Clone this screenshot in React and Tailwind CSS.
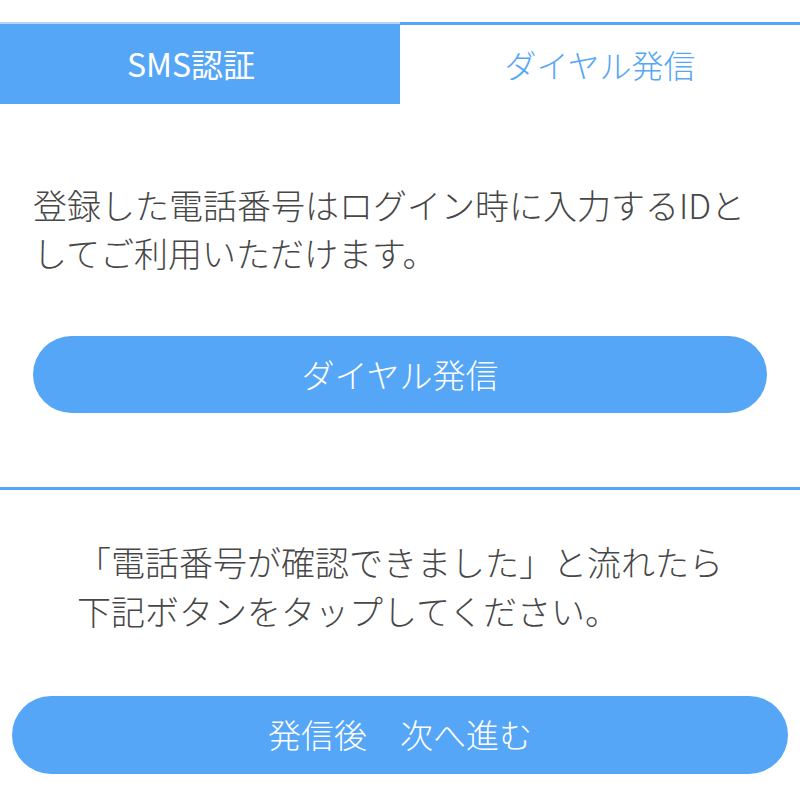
export default function App() {
  return (
    <div
      className="w-[800px] h-[800px] bg-white overflow-hidden text-[#474747] font-light"
      style={{ fontFamily: '"Noto Sans CJK JP", "Noto Sans", sans-serif' }}
    >
      {/* Tabs */}
      <div className="flex pt-[22px]">
        <div className="w-[400px] h-[82px] bg-[#56a6f7] border-t-[2px] border-[#b4d7fa] flex items-center justify-center pr-[18px] pb-[2px] text-white text-[32px] font-normal">
          SMS認証
        </div>
        <div className="flex-1 h-[82px] border-t-[3px] border-[#56a6f7] flex items-center justify-center pb-[2px] text-[#56a6f7] text-[32px]">
          ダイヤル発信
        </div>
      </div>

      {/* Description */}
      <p className="mt-[77px] px-[33px] text-[34px] leading-[48px]">
        登録した電話番号はログイン時に入力するIDと
        <br />
        してご利用いただけます。
      </p>

      <div className="px-[33px] mt-[59px]">
        <button className="w-full h-[77px] rounded-full bg-[#56a6f7] text-white text-[33px]">
          ダイヤル発信
        </button>
      </div>

      <div className="mt-[74px] h-[3px] bg-[#56a6f7]" />

      {/* After dial */}
      <div className="flex justify-center mt-[47px]">
        <p className="text-[34px] leading-[49px]">
          「電話番号が確認できました」と流れたら
          <br />
          下記ボタンをタップしてください。
        </p>
      </div>

      <div className="px-[12px] mt-[61px]">
        <button className="w-full h-[78px] rounded-full bg-[#56a6f7] text-white text-[33px]">
          発信後　次へ進む
        </button>
      </div>
    </div>
  );
}
